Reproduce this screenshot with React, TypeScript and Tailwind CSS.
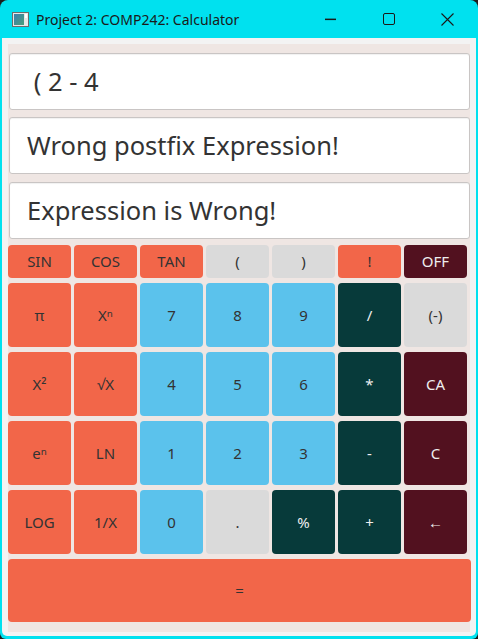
import React from "react";

type Btn = { label: string; kind: "o" | "b" | "g" | "t" | "m" };

const cls: Record<Btn["kind"], string> = {
  o: "bg-[#f26649] text-[#333333]",
  b: "bg-[#5bc2ec] text-[#333333]",
  g: "bg-[#dadada] text-[#333333]",
  t: "bg-[#073a3a] text-[#eeeeee]",
  m: "bg-[#52111f] text-[#eeeeee]",
};

const row1: Btn[] = [
  { label: "SIN", kind: "o" },
  { label: "COS", kind: "o" },
  { label: "TAN", kind: "o" },
  { label: "(", kind: "g" },
  { label: ")", kind: "g" },
  { label: "!", kind: "o" },
  { label: "OFF", kind: "m" },
];

const rows: Btn[][] = [
  [
    { label: "π", kind: "o" },
    { label: "Xⁿ", kind: "o" },
    { label: "7", kind: "b" },
    { label: "8", kind: "b" },
    { label: "9", kind: "b" },
    { label: "/", kind: "t" },
    { label: "(-)", kind: "g" },
  ],
  [
    { label: "X²", kind: "o" },
    { label: "√X", kind: "o" },
    { label: "4", kind: "b" },
    { label: "5", kind: "b" },
    { label: "6", kind: "b" },
    { label: "*", kind: "t" },
    { label: "CA", kind: "m" },
  ],
  [
    { label: "eⁿ", kind: "o" },
    { label: "LN", kind: "o" },
    { label: "1", kind: "b" },
    { label: "2", kind: "b" },
    { label: "3", kind: "b" },
    { label: "-", kind: "t" },
    { label: "C", kind: "m" },
  ],
  [
    { label: "LOG", kind: "o" },
    { label: "1/X", kind: "o" },
    { label: "0", kind: "b" },
    { label: ".", kind: "g" },
    { label: "%", kind: "t" },
    { label: "+", kind: "t" },
    { label: "←", kind: "m" },
  ],
];

function Field({ text }: { text: string }) {
  return (
    <div className="ml-[1px] h-[57px] rounded-[3px] border border-[#c9c5c4] bg-white shadow-[inset_0_1px_1px_rgba(0,0,0,0.06)] flex items-center pl-[17px] text-[25.5px] text-[#333333] whitespace-pre">
      {text}
    </div>
  );
}

export default function App() {
  return (
    <div
      className="w-[478px] h-[639px] bg-[#1c1c1c]"
      style={{ fontFamily: '"Noto Sans", "Open Sans", sans-serif' }}
    >
      <div className="w-full h-full rounded-t-[8px] rounded-b-[6px] bg-[#00e1ef] flex flex-col overflow-hidden">
        {/* title bar */}
        <div className="h-[38px] flex items-center shrink-0">
          <svg width="17" height="15" viewBox="0 0 17 15" className="ml-[12px]">
            <defs>
              <linearGradient id="ic" x1="0" y1="0" x2="1" y2="1">
                <stop offset="0" stopColor="#3a7fb0" />
                <stop offset="1" stopColor="#4aa07a" />
              </linearGradient>
            </defs>
            <rect x="0.5" y="0.5" width="16" height="14" fill="#e8e8e8" stroke="#6b6b6b" />
            <rect x="2" y="2" width="10" height="11" fill="url(#ic)" />
            <rect x="13" y="2" width="2" height="4" fill="#ffffff" />
          </svg>
          <span className="ml-[7px] text-[14px] text-[#1a1a1a]">
            Project 2: COMP242: Calculator
          </span>
          <div className="ml-auto mr-[2px] flex items-center h-full">
            <div className="w-[58px] h-full flex items-center justify-center">
              <svg width="12" height="12" viewBox="0 0 12 12">
                <rect x="0" y="5.6" width="11" height="1.5" fill="#1a1a1a" />
              </svg>
            </div>
            <div className="w-[58px] h-full flex items-center justify-center">
              <svg width="12" height="12" viewBox="0 0 12 12">
                <rect x="0.5" y="0.5" width="11" height="11" rx="1.5" fill="none" stroke="#1a1a1a" strokeWidth="1" />
              </svg>
            </div>
            <div className="w-[58px] h-full flex items-center justify-center">
              <svg width="13" height="13" viewBox="0 0 13 13">
                <path d="M0.5 0.5 L12.5 12.5 M12.5 0.5 L0.5 12.5" stroke="#1a1a1a" strokeWidth="1.1" />
              </svg>
            </div>
          </div>
        </div>
        {/* content */}
        <div className="flex-1 mx-[2px] mb-[3px] bg-[#f3f3f3] rounded-b-[5px] px-[6px] pt-[6px] pb-[4px] flex">
          <div className="flex-1 bg-[#efe6e3] pt-[9px] pb-[10px] flex flex-col">
            <Field text=" ( 2 - 4" />
            <div className="h-[7px]" />
            <Field text="Wrong postfix Expression!" />
            <div className="h-[8px]" />
            <Field text="Expression is Wrong!" />
            <div className="h-[6px]" />
            <div className="grid grid-cols-[repeat(7,63px)] gap-x-[3px] gap-y-[5px] text-[15px]">
              {row1.map((b, i) => (
                <div key={i} className={`h-[33px] rounded-[4px] flex items-center justify-center ${cls[b.kind]}`}>
                  {b.label}
                </div>
              ))}
              {rows.flat().map((b, i) => (
                <div key={i} className={`h-[64px] rounded-[4px] flex items-center justify-center ${cls[b.kind]}`}>
                  {b.label}
                </div>
              ))}
            </div>
            <div className="mt-[5px] h-[63px] mr-[-1px] rounded-[4px] bg-[#f26649] text-[#333333] text-[15px] flex items-center justify-center">
              =
            </div>
          </div>
        </div>
      </div>
    </div>
  );
}
